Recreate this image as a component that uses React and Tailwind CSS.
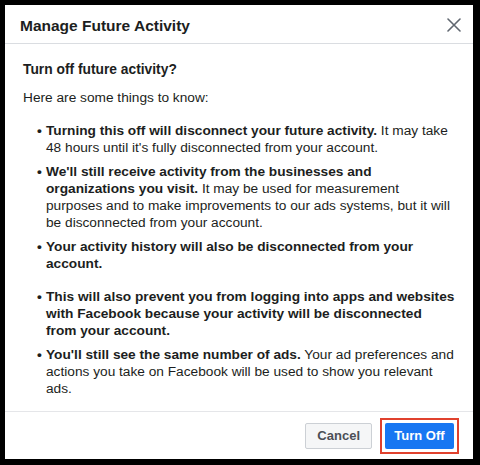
import React from "react";

const items = [
  {
    b: "Turning this off will disconnect your future activity.",
    t: " It may take 48 hours until it's fully disconnected from your account.",
  },
  {
    b: "We'll still receive activity from the businesses and organizations you visit.",
    t: " It may be used for measurement purposes and to make improvements to our ads systems, but it will be disconnected from your account.",
  },
  { b: "Your activity history will also be disconnected from your account.", t: "", extra: true },
  {
    b: "This will also prevent you from logging into apps and websites with Facebook because your activity will be disconnected from your account.",
    t: "",
  },
  {
    b: "You'll still see the same number of ads.",
    t: " Your ad preferences and actions you take on Facebook will be used to show you relevant ads.",
  },
];

export default function App() {
  return (
    <div
      className="w-[480px] h-[465px] bg-black pl-[5px] pt-[5px] pr-[7px] pb-[6px]"
      style={{ fontFamily: "'Liberation Sans', Arial, sans-serif" }}
    >
      <div className="h-full bg-white flex flex-col text-[#1c1e21]">
        <div className="h-[39px] flex items-center justify-between pl-[15px] pr-[12px] pt-[3px] border-b border-[#dadde1]">
          <h1 className="text-[15.5px] font-bold">Manage Future Activity</h1>
          <svg width="14" height="14" viewBox="0 0 14 14" className="text-[#606770] -mt-[2px]">
            <path d="M1 1L13 13M13 1L1 13" stroke="currentColor" strokeWidth="1.6" strokeLinecap="round" />
          </svg>
        </div>
        <div className="flex-1 px-[18px] pt-[16px]">
          <h2 className="text-[13.8px] font-bold leading-[20px]">Turn off future activity?</h2>
          <p className="text-[13.7px] leading-[20px] mt-[8px]">Here are some things to know:</p>
          <ul className="mt-[14px] pl-[14px]">
            {items.map((it, i) => (
              <li key={i} className={`flex text-[13.7px] leading-[17px] ${it.extra ? "mb-[16px]" : "mb-[7px]"}`}>
                <span className="w-[9px] shrink-0 font-bold">•</span>
                <span>
                  <b className="font-bold">{it.b}</b>
                  {it.t}
                </span>
              </li>
            ))}
          </ul>
        </div>
        <div className="h-[48px] border-t border-[#e5e6e9] flex items-center justify-end gap-[8px] pr-[14px]">
          <button className="h-[26px] px-[11px] bg-[#f5f6f7] border border-[#ccd0d5] rounded-[2px] text-[13px] font-bold text-[#4b4f56]">
            Cancel
          </button>
          <div className="border-2 border-[#e0412d] p-[3px] -my-[5px]">
            <button className="h-[26px] w-[69px] bg-[#1877f2] rounded-[2px] text-[13px] font-bold text-white">
              Turn Off
            </button>
          </div>
        </div>
      </div>
    </div>
  );
}
